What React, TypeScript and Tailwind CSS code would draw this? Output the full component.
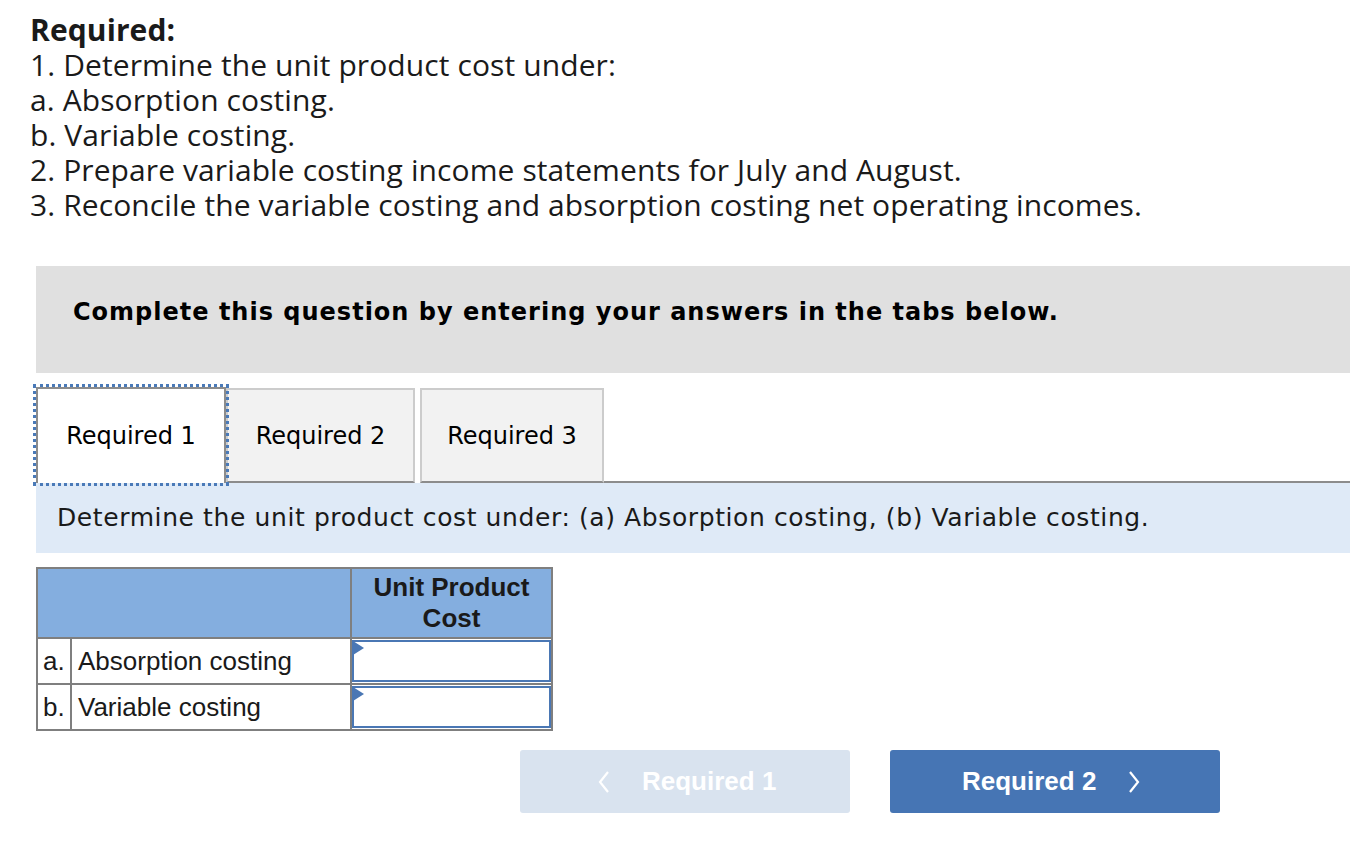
import React, { useState } from 'react';

const tabs = ['Required 1', 'Required 2', 'Required 3'];

const rows = [
  { key: 'a.', label: 'Absorption costing' },
  { key: 'b.', label: 'Variable costing' },
];

const App: React.FC = () => {
  const [active, setActive] = useState(0);

  return (
    <div className="min-h-screen w-[1350px] bg-white pl-[30px] pt-[12px] text-[#1a1a1a]">
      <div className="font-['Open_Sans',sans-serif] text-[30px] leading-[35px] tracking-[0.1px]">
        <div className="font-bold">Required:</div>
        <div>1. Determine the unit product cost under:</div>
        <div>a. Absorption costing.</div>
        <div>b. Variable costing.</div>
        <div>2. Prepare variable costing income statements for July and August.</div>
        <div>3. Reconcile the variable costing and absorption costing net operating incomes.</div>
      </div>

      <div className="ml-[6px] mt-[44px]">
        <div className="flex h-[107px] items-center bg-[#e0e0e0] pb-[16px] pl-[37px]">
          <p className="font-['DejaVu_Sans',Verdana,sans-serif] text-[24px] font-bold tracking-[1px] text-black">
            Complete this question by entering your answers in the tabs below.
          </p>
        </div>

        <div className="mt-[14px] flex items-end">
          {tabs.map((t, i) => (
            <button
              key={t}
              type="button"
              onClick={() => setActive(i)}
              className={
                i === active
                  ? 'relative z-10 flex h-[96px] w-[190px] items-center justify-center border-2 border-b-0 border-[#8c8c8c] bg-white outline-dotted outline-[3px] outline-[#4a7ab8] font-["DejaVu_Sans",Tahoma,sans-serif] text-[24px] text-black'
                  : 'flex h-[95px] items-center justify-center border-2 border-[#cccccc] border-b-[#8c8c8c] bg-[#f2f2f2] font-["DejaVu_Sans",Tahoma,sans-serif] text-[24px] text-black ' +
                    (i === 2 ? 'ml-[5px] w-[184px]' : 'w-[189px]')
              }
            >
              {t}
            </button>
          ))}
          <div className="h-[2px] flex-1 bg-[#8c8c8c]" />
        </div>

        <div className="flex h-[70px] items-center bg-[#dfeaf7] pl-[21px]">
          <p className="font-['DejaVu_Sans',Verdana,sans-serif] text-[25px] tracking-[0.6px] text-[#1a1a1a]">
            Determine the unit product cost under: (a) Absorption costing, (b) Variable costing.
          </p>
        </div>

        <table className="mt-[14px] border-collapse font-['Liberation_Sans',Arial,sans-serif] text-[26px] text-[#1a1a1a]">
          <thead>
            <tr className="h-[70px] bg-[#84aedf]">
              <th colSpan={2} className="w-[314px] border-2 border-[#7f7f7f]" />
              <th className="w-[201px] border-2 border-[#7f7f7f] font-bold leading-[31px]">
                Unit Product
                <br />
                Cost
              </th>
            </tr>
          </thead>
          <tbody>
            {rows.map((r) => (
              <tr key={r.key} className="h-[46px]">
                <td className="w-[34px] border-2 border-[#7f7f7f] pl-[5px]">{r.key}</td>
                <td className="border-2 border-[#7f7f7f] pl-[6px]">{r.label}</td>
                <td className="border-2 border-[#7f7f7f] p-0">
                  <div className="relative h-[42px] border-2 border-[#4a77b4] bg-white">
                    <div className="absolute left-[-1px] top-[-1px] h-0 w-0 border-y-[7px] border-l-[11px] border-y-transparent border-l-[#4a77b4]" />
                  </div>
                </td>
              </tr>
            ))}
          </tbody>
        </table>

        <div className="mt-[19px] flex gap-[40px] pl-[484px] font-['Liberation_Sans',Arial,sans-serif] text-[26px] font-bold text-white">
          <button
            type="button"
            className="flex h-[63px] w-[330px] items-center gap-[32px] rounded-[3px] bg-[#d9e3ef] pl-[77px]"
          >
            <svg width="13" height="24" viewBox="0 0 13 24" fill="none" stroke="white" strokeWidth="2.2">
              <path d="M11 2 L3 12 L11 22" />
            </svg>
            <span>Required 1</span>
          </button>
          <button
            type="button"
            className="flex h-[63px] w-[330px] items-center gap-[32px] rounded-[3px] bg-[#4675b4] pl-[72px]"
          >
            <span>Required 2</span>
            <svg width="13" height="24" viewBox="0 0 13 24" fill="none" stroke="white" strokeWidth="2.2">
              <path d="M2 2 L10 12 L2 22" />
            </svg>
          </button>
        </div>
      </div>
    </div>
  );
};

export default App;
